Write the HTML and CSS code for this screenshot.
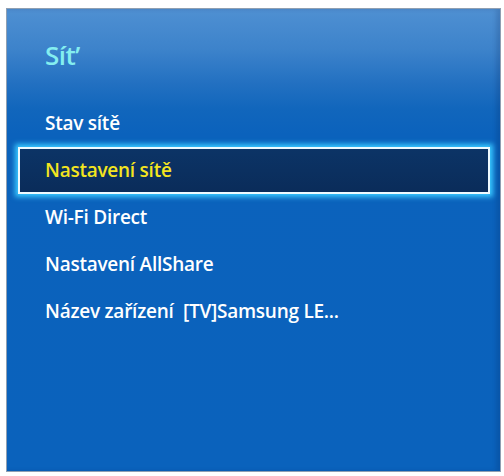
FILE: index.html
```html
<!DOCTYPE html>
<html lang="cs">
<head>
<meta charset="utf-8">
<link rel="stylesheet" href="styles.css">
</head>
<body>
<div class="panel">
  <div class="title">Sít’</div>
  <ul class="menu">
    <li class="item">Stav sítě</li>
    <li class="item selected">Nastavení sítě</li>
    <li class="item">Wi-Fi Direct</li>
    <li class="item">Nastavení AllShare</li>
    <li class="item">Název zařízení&nbsp; [TV]Samsung LE...</li>
  </ul>
</div>
</body>
</html>
```
FILE: styles.css
```css
html, body {
  margin: 0;
  padding: 0;
  background: #ffffff;
}
body {
  font-family: "Open Sans", "Noto Sans", sans-serif;
}
.panel {
  margin: 8px 0 0 6px;
  width: 495px;
  height: 464px;
  box-sizing: border-box;
  border: 1px solid #8f9fb2;
  background: linear-gradient(to bottom, #4f90d2 0px, #3d83cb 40px, #2270c1 75px, #1166bc 100px, #0b62bc 125px, #0a62bc 100%);
  box-shadow: inset -4px 0 4px rgba(0, 20, 70, 0.15);
}
.title {
  height: 91px;
  box-sizing: border-box;
  padding: 28px 0 0 38px;
  font-size: 26px;
  line-height: 36px;
  font-weight: 600;
  color: #84eef0;
  letter-spacing: -0.5px;
}
.menu {
  list-style: none;
  margin: 0;
  padding: 0;
}
.item {
  height: 47px;
  box-sizing: border-box;
  margin: 0 10px 0 11px;
  padding-left: 25px;
  border: 2px solid transparent;
  font-size: 19px;
  line-height: 43px;
  font-weight: 600;
  color: #ffffff;
  letter-spacing: -0.25px;
  white-space: nowrap;
}
.item.selected {
  border-color: #eefaff;
  background: linear-gradient(to bottom, #0c3466, #0a2c5a);
  color: #f3e51f;
  box-shadow: 0 0 5px 3px #39c8ff;
}
```
